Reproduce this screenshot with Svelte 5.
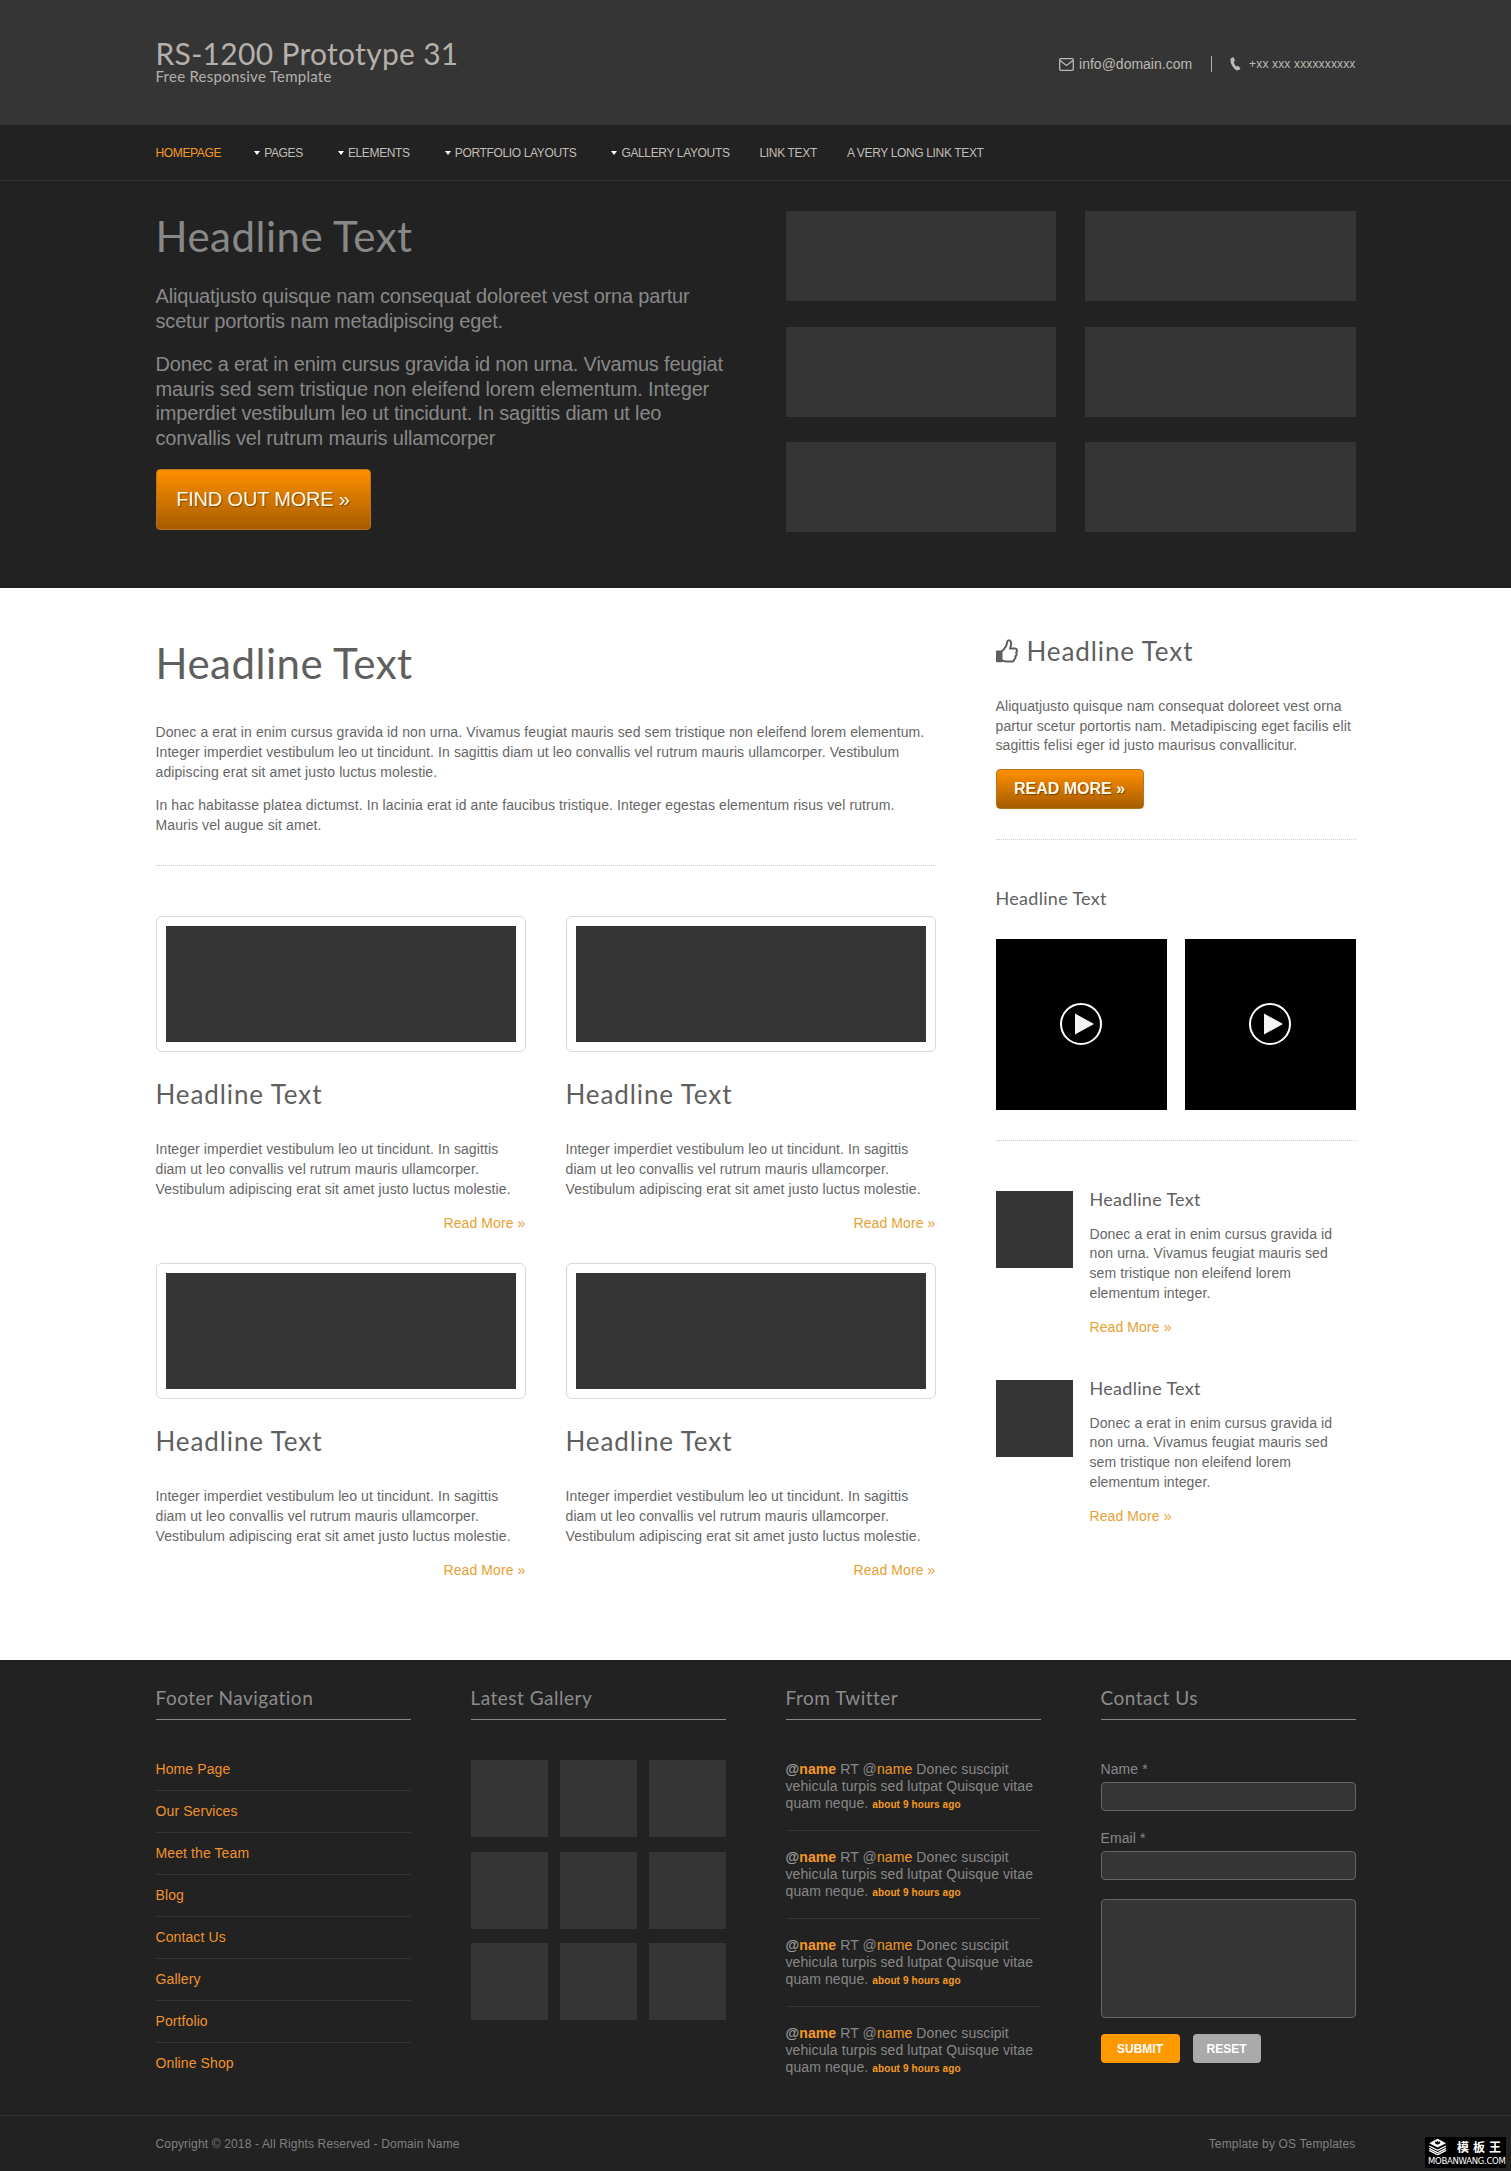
<script lang="ts">
	const navItems = [
		{ label: 'Homepage', active: true },
		{ label: 'Pages', drop: true },
		{ label: 'Elements', drop: true },
		{ label: 'Portfolio Layouts', drop: true },
		{ label: 'Gallery Layouts', drop: true },
		{ label: 'Link Text' },
		{ label: 'A Very Long Link Text' }
	];
	const footerLinks = ['Home Page', 'Our Services', 'Meet the Team', 'Blog', 'Contact Us', 'Gallery', 'Portfolio', 'Online Shop'];
</script>

<div class="page">
	<header class="top">
		<div class="wrap top-inner">
			<div class="brand">
				<h1>RS-1200 Prototype 31</h1>
				<p>Free Responsive Template</p>
			</div>
			<ul class="contact">
				<li>
					<svg width="15" height="13" viewBox="0 0 15 13" fill="none" stroke="currentColor" stroke-width="1.3">
						<rect x="0.7" y="0.7" width="13.6" height="11.6" rx="1" />
						<path d="M1 2.5l6.5 5 6.5-5" />
					</svg>
					info@domain.com
				</li>
				<li class="phone">
					<svg width="11" height="14" viewBox="0 0 11 14" fill="currentColor">
						<path d="M2.6.4 L.7 1.4 C-.3 4.800 2.600 11.300 7.100 13.600 L9.300 12.800 C10 12.400 10.400 11.800 10.300 11.300 L8 8.700 L6.300 9.500 C4.900 8.300 3.900 6.200 3.800 4.400 L5 3.500 L3.900.7 C3.600.2 3.100.1 2.600.4Z" />
					</svg>
					<span>+xx xxx xxxxxxxxxx</span>
				</li>
			</ul>
		</div>
	</header>

	<nav class="bar">
		<ul class="wrap nav">
			{#each navItems as item}
				<li class:active={item.active} class:drop={item.drop}>{item.label}</li>
			{/each}
		</ul>
	</nav>

	<section class="hero">
		<div class="wrap hero-inner">
			<div class="hero-copy">
				<h2 class="head-xl">Headline Text</h2>
				<p>Aliquatjusto quisque nam consequat doloreet vest orna partur scetur portortis nam metadipiscing eget.</p>
				<p>Donec a erat in enim cursus gravida id non urna. Vivamus feugiat mauris sed sem tristique non eleifend lorem elementum. Integer imperdiet vestibulum leo ut tincidunt. In sagittis diam ut leo convallis vel rutrum mauris ullamcorper</p>
				<a class="btn btn-big" href="#top">FIND OUT MORE »</a>
			</div>
			<div class="hero-grid">
				{#each Array(6) as _}
					<div></div>
				{/each}
			</div>
		</div>
	</section>

	<main class="wrap content">
		<div class="primary">
			<h2 class="head-xl">Headline Text</h2>
			<div class="intro">
				<p>Donec a erat in enim cursus gravida id non urna. Vivamus feugiat mauris sed sem tristique non eleifend lorem elementum. Integer imperdiet vestibulum leo ut tincidunt. In sagittis diam ut leo convallis vel rutrum mauris ullamcorper. Vestibulum adipiscing erat sit amet justo luctus molestie.</p>
				<p>In hac habitasse platea dictumst. In lacinia erat id ante faucibus tristique. Integer egestas elementum risus vel rutrum. Mauris vel augue sit amet.</p>
			</div>
			<div class="cards">
				{#each Array(4) as _}
					<article class="card">
						<div class="frame"><div></div></div>
						<h3 class="head-md">Headline Text</h3>
						<p>Integer imperdiet vestibulum leo ut tincidunt. In sagittis diam ut leo convallis vel rutrum mauris ullamcorper. Vestibulum adipiscing erat sit amet justo luctus molestie.</p>
						<a class="more right" href="#top">Read More »</a>
					</article>
				{/each}
			</div>
		</div>

		<aside class="side">
			<div class="side-top">
				<h3 class="head-md side-title">
					<svg width="22" height="24" viewBox="0 0 22 24" fill="none" stroke="currentColor" stroke-width="2" stroke-linejoin="round">
						<path d="M1 12.500h4.500v9.800H1z" fill="currentColor" />
						<path d="M5.500 12.500C8.500 10 10.800 7 11.200 2.800 11.400 1 14 .8 14.800 2.800 15.500 5 15 7.500 14 9.500h4.800c2.500 0 2.800 3 1.300 4 1 1.500.5 3.300-.8 3.800.6 1.600-.2 3-1.300 3.300.2 1.500-.8 1.900-2 1.900H10c-2 0-3-1-4.500-1.300" />
					</svg>
					Headline Text
				</h3>
				<p>Aliquatjusto quisque nam consequat doloreet vest orna partur scetur portortis nam. Metadipiscing eget facilis elit sagittis felisi eger id justo maurisus convallicitur.</p>
				<a class="btn btn-small" href="#top">READ MORE »</a>
			</div>

			<div class="side-video">
				<h4 class="head-sm">Headline Text</h4>
				<div class="videos">
					{#each Array(2) as _}
						<div class="video">
							<svg width="44" height="44" viewBox="0 0 44 44">
								<circle cx="22" cy="22" r="20" fill="none" stroke="#fff" stroke-width="2" />
								<path d="M16 11.500 35 22 16 32.500z" fill="#f4f4f4" />
							</svg>
						</div>
					{/each}
				</div>
			</div>

			<div class="side-media">
				{#each Array(2) as _}
					<article class="media">
						<div class="thumb"></div>
						<div class="media-body">
							<h4 class="head-xs">Headline Text</h4>
							<p>Donec a erat in enim cursus gravida id non urna. Vivamus feugiat mauris sed sem tristique non eleifend lorem elementum integer.</p>
							<a class="more" href="#top">Read More »</a>
						</div>
					</article>
				{/each}
			</div>
		</aside>
	</main>

	<footer class="foot">
		<div class="wrap foot-cols">
			<section>
				<h4 class="foot-title">Footer Navigation</h4>
				<ul class="foot-links">
					{#each footerLinks as link}
						<li>{link}</li>
					{/each}
				</ul>
			</section>
			<section>
				<h4 class="foot-title">Latest Gallery</h4>
				<div class="foot-gallery">
					{#each Array(9) as _}
						<div></div>
					{/each}
				</div>
			</section>
			<section>
				<h4 class="foot-title">From Twitter</h4>
				<ul class="tweets">
					{#each Array(4) as _}
						<li>
							<b>@<em>name</em></b> RT @<em>name</em> Donec suscipit vehicula turpis sed lutpat Quisque vitae quam neque. <small>about 9 hours ago</small>
						</li>
					{/each}
				</ul>
			</section>
			<section>
				<h4 class="foot-title">Contact Us</h4>
				<form class="form">
					<label for="f-name">Name *</label>
					<input id="f-name" type="text" />
					<label for="f-email">Email *</label>
					<input id="f-email" type="text" />
					<textarea aria-label="Message"></textarea>
					<div class="form-btns">
						<button type="button" class="submit">SUBMIT</button>
						<button type="button" class="reset">RESET</button>
					</div>
				</form>
			</section>
		</div>
		<div class="copy">
			<div class="wrap copy-inner">
				<span>Copyright © 2018 - All Rights Reserved - Domain Name</span>
				<span>Template by OS Templates</span>
			</div>
		</div>
	</footer>

	<div class="stamp">
		<svg width="24" height="22" viewBox="0 0 24 22">
			<path d="M12 1 22.500 6.500 12 12 1.500 6.500z" fill="#fff" />
			<path d="M8.500 6.500 9 4l1.500 1L12 3.500 13.500 5 15 4l.5 2.500L12 8.500z" fill="#111" />
			<path d="M1.500 10 12 15.500 22.500 10M1.500 13 12 18.500 22.500 13M1.500 15.500 12 21 22.500 15.500" fill="none" stroke="#fff" stroke-width="1.500" />
		</svg>
		<div class="stamp-cn">模板王</div>
		<div class="stamp-en">MOBANWANG.COM</div>
	</div>
</div>

<style>
	:global(body) {
		margin: 0;
		background: #fff;
		font-family: 'Liberation Sans', Arial, sans-serif;
		font-size: 14px;
		line-height: 20px;
		letter-spacing: 0.1px;
		color: #666;
	}

	h1, h2, h3, h4, p, ul {
		margin: 0;
		padding: 0;
		font-weight: 400;
	}

	ul {
		list-style: none;
	}

	a {
		text-decoration: none;
	}

	.page {
		position: relative;
		width: 1511px;
		height: 2171px;
		overflow: hidden;
	}

	.wrap {
		width: 1200px;
		margin: 0 auto;
	}

	.head-xl, .head-md, .head-sm, .head-xs, .brand h1, .brand p, .foot-title {
		font-family: Lato, sans-serif;
	}

	.head-xl {
		font-size: 42px;
		line-height: 50px;
		letter-spacing: 0.5px;
	}

	.head-md {
		font-size: 26px;
		line-height: 32px;
		letter-spacing: 0.9px;
		color: #5f5f5f;
	}

	.head-sm {
		font-size: 18px;
		line-height: 24px;
		letter-spacing: 0.3px;
		color: #5f5f5f;
	}

	.head-xs {
		font-size: 18px;
		line-height: 24px;
		letter-spacing: 0.3px;
		color: #5f5f5f;
	}

	/* top */
	.top {
		height: 125px;
		background: #353535;
	}

	.top-inner {
		display: flex;
		align-items: center;
		justify-content: space-between;
		height: 125px;
	}

	.brand {
		color: #b5b0ab;
		margin-top: -7px;
	}

	.brand h1 {
		font-size: 30px;
		line-height: 36px;
		letter-spacing: 0.3px;
	}

	.brand p {
		font-size: 15px;
		line-height: 16px;
		letter-spacing: 0.25px;
		margin-top: -3px;
	}

	.contact {
		display: flex;
		align-items: center;
		color: #bdb9b4;
		margin-top: 3px;
		letter-spacing: 0;
	}

	.contact li {
		display: flex;
		align-items: center;
		gap: 5px;
	}

	.contact li.phone {
		border-left: 1px solid #b5b0ab;
		margin-left: 19px;
		padding-left: 18px;
		height: 16px;
		gap: 8px;
		font-size: 12px;
		letter-spacing: 0.15px;
	}

	/* nav */
	.bar {
		height: 55px;
		background: #222;
		border-bottom: 1px solid #333;
	}

	.nav {
		display: flex;
		align-items: center;
		height: 55px;
		gap: 30px;
		font-size: 12px;
		font-weight: 400;
		letter-spacing: -0.35px;
		text-transform: uppercase;
		color: #c2bdb8;
	}

	.nav li.active {
		color: #f39a21;
		margin-right: -2px;
	}

	.nav li.drop {
		position: relative;
		padding-left: 5px;
		margin-left: 10px;
	}

	.nav li.drop::before {
		content: '';
		position: absolute;
		left: -5px;
		top: 8px;
		border: 3px solid transparent;
		border-top: 4px solid #fff;
		border-bottom: 0;
	}

	/* hero */
	.hero {
		height: 407px;
		background: #222;
		color: #888;
	}

	.hero-inner {
		display: flex;
		justify-content: space-between;
		padding-top: 30px;
	}

	.hero-copy {
		width: 585px;
		font-size: 20px;
		line-height: 24.500px;
		letter-spacing: -0.18px;
	}

	.hero-copy p {
		margin-top: 19px;
	}

	.hero-copy .head-xl {
		margin-bottom: 23px;
		margin-top: 0;
	}

	.hero-copy .head-xl + p {
		margin-top: 0;
	}

	.btn {
		display: flex;
		align-items: center;
		justify-content: center;
		box-sizing: border-box;
		border: 1px solid #b8741c;
		border-radius: 4px;
		background: linear-gradient(#ff9000, #a55c00);
		color: #fff9e8;
		text-shadow: 1px 1px 1px rgba(90, 50, 0, 0.7);
	}

	.btn-big {
		width: 215px;
		height: 61px;
		margin-top: 19px;
		font-size: 20px;
	}

	.btn-small {
		width: 148px;
		height: 40px;
		margin-top: 13px;
		font-size: 16px;
		font-weight: 700;
		letter-spacing: 0;
	}

	.hero-grid {
		display: grid;
		grid-template-columns: 270px 271px;
		grid-auto-rows: 90px;
		gap: 25.500px 29px;
		width: 570px;
	}

	.hero-grid div {
		background: #353535;
	}

	/* main */
	.content {
		display: flex;
		justify-content: space-between;
		height: 1072px;
	}

	.primary {
		width: 780px;
		padding-top: 50px;
	}

	.primary .head-xl {
		color: #5f5f5f;
	}

	.intro {
		margin-top: 34px;
		padding-bottom: 30px;
		border-bottom: 1px dotted #ccc;
	}

	.intro p + p {
		margin-top: 13px;
	}

	.cards {
		display: grid;
		grid-template-columns: 370px 370px;
		column-gap: 40px;
		row-gap: 30px;
		margin-top: 50px;
	}

	.frame {
		box-sizing: border-box;
		height: 136px;
		padding: 9px;
		border: 1px solid #d8d8d8;
		border-radius: 6px;
	}

	.frame div {
		height: 116px;
		background: #353535;
	}

	.card .head-md {
		margin-top: 26px;
	}

	.card p {
		margin-top: 29px;
	}

	.more {
		display: block;
		color: #e8a030;
	}

	.more.right {
		text-align: right;
		margin-top: 14px;
	}

	.side {
		width: 360px;
		padding-top: 47px;
		line-height: 19.600px;
	}

	.side-title {
		display: flex;
		align-items: center;
		gap: 9px;
	}

	.side-top {
		padding-bottom: 30px;
		border-bottom: 1px dotted #ccc;
	}

	.side-top p {
		margin-top: 30px;
	}

	.side-video {
		padding: 46px 0 30px;
		border-bottom: 1px dotted #ccc;
	}

	.videos {
		display: flex;
		justify-content: space-between;
		margin-top: 29px;
	}

	.video {
		display: flex;
		align-items: center;
		justify-content: center;
		width: 171px;
		height: 171px;
		background: #000;
	}

	.side-media {
		display: flex;
		flex-direction: column;
		gap: 42px;
		padding-top: 50px;
	}

	.media {
		display: flex;
		gap: 17px;
	}

	.media-body {
		width: 255px;
		margin-top: -4px;
	}

	.thumb {
		flex: none;
		width: 77px;
		height: 77px;
		background: #353535;
	}

	.media p {
		margin-top: 14px;
	}

	.media .more {
		margin-top: 15px;
	}

	/* footer */
	.foot {
		height: 511px;
		background: #222;
		color: #888;
	}

	.foot-cols {
		display: grid;
		grid-template-columns: repeat(4, 255px);
		column-gap: 60px;
		height: 455px;
		padding-top: 24px;
		box-sizing: border-box;
	}

	.foot-title {
		height: 35px;
		font-size: 19px;
		line-height: 28px;
		letter-spacing: 0.5px;
		color: #8c8c8c;
		border-bottom: 1px solid #888;
	}

	.foot-links {
		margin-top: 29px;
		color: #f0932b;
	}

	.foot-links li {
		height: 41px;
		line-height: 41px;
		border-bottom: 1px solid #333;
	}

	.foot-links li:last-child {
		border-bottom: 0;
	}

	.foot-gallery {
		display: grid;
		grid-template-columns: repeat(3, 77px);
		grid-auto-rows: 77px;
		gap: 14.500px 12px;
		margin-top: 40px;
	}

	.foot-gallery div {
		background: #353535;
	}

	.tweets {
		margin-top: 41px;
		line-height: 17px;
	}

	.tweets li {
		padding-bottom: 17px;
		margin-bottom: 18px;
		border-bottom: 1px solid #333;
	}

	.tweets li:last-child {
		border-bottom: 0;
	}

	.tweets b {
		font-weight: 700;
		color: #999;
	}

	.tweets em {
		font-style: normal;
		color: #f39a21;
	}

	.tweets small {
		font-size: 10px;
		font-weight: 700;
		color: #f39a21;
	}

	.form {
		display: flex;
		flex-direction: column;
		margin-top: 41px;
	}

	.form label {
		line-height: 17px;
		margin-bottom: 4px;
	}

	.form input, .form textarea {
		box-sizing: border-box;
		width: 255px;
		height: 29px;
		margin: 0 0 19px;
		padding: 0;
		background: #353535;
		border: 1px solid #666;
		border-radius: 4px;
		resize: none;
		display: block;
	}

	.form textarea {
		height: 119px;
		margin: 0 0 16px;
	}

	.form-btns {
		display: flex;
		gap: 13px;
	}

	.form-btns button {
		height: 29px;
		border: 0;
		border-radius: 4px;
		padding: 0;
		color: #fff;
		font: 700 12px 'Liberation Sans', sans-serif;
	}

	.submit {
		width: 79px;
		background: #ff9900;
	}

	.reset {
		width: 68px;
		background: #aaa;
	}

	.copy {
		border-top: 1px solid #333;
		height: 55px;
		font-size: 12px;
		letter-spacing: 0.15px;
		color: #808080;
	}

	.copy-inner {
		display: flex;
		justify-content: space-between;
		align-items: center;
		height: 55px;
	}

	/* overlay stamp in the corner */
	.stamp {
		position: absolute;
		left: 1425px;
		top: 2137px;
		width: 81px;
		height: 31px;
		background: #000;
		color: #fff;
	}

	.stamp svg {
		position: absolute;
		left: 3px;
		top: 1px;
		transform: scale(0.8);
		transform-origin: top left;
	}

	.stamp-cn {
		position: absolute;
		left: 32px;
		top: 1px;
		font: 700 12px/18px 'Noto Sans CJK SC', sans-serif;
		letter-spacing: 4px;
		white-space: nowrap;
	}

	.stamp-en {
		position: absolute;
		left: 3px;
		top: 19px;
		font: 400 8.500px/11px 'DejaVu Sans', sans-serif;
		letter-spacing: -0.3px;
		white-space: nowrap;
	}
</style>
